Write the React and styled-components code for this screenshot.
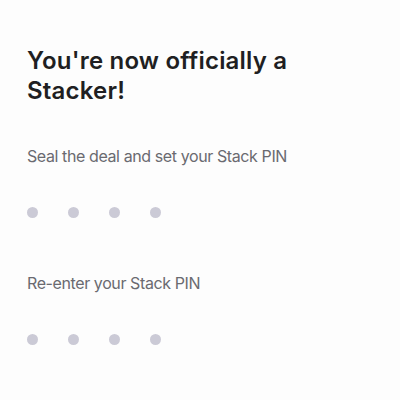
import React from 'react'
import styled, { createGlobalStyle } from 'styled-components'

const GlobalStyle = createGlobalStyle`
  html, body {
    margin: 0;
    padding: 0;
    background: #fdfdfd;
  }
  body {
    font-family: 'Inter', 'Lato', sans-serif;
  }
`

const Screen = styled.div`
  width: 400px;
  height: 400px;
  box-sizing: border-box;
  padding: 46px 27px 0;
  background: #fdfdfd;
  display: flex;
  flex-direction: column;
`

const Title = styled.h1`
  margin: 0;
  font-size: 24px;
  line-height: 30px;
  font-weight: 600;
  color: #1f1f22;
  letter-spacing: 0.2px;
`

const Label = styled.p`
  margin: ${p => p.top}px 0 0;
  font-size: 16px;
  line-height: 20px;
  font-weight: 400;
  color: #6a6a70;
  letter-spacing: -0.4px;
`

const Dots = styled.div`
  display: flex;
  gap: 30px;
  margin-top: ${p => p.top}px;
`

const Dot = styled.span`
  width: 11px;
  height: 11px;
  border-radius: 50%;
  background: #cbcad6;
`

const PinDots = ({ top }) => (
  <Dots top={top}>
    {[0, 1, 2, 3].map(i => <Dot key={i} />)}
  </Dots>
)

export default function App () {
  return (
    <>
      <GlobalStyle />
      <Screen>
        <Title>You're now officially a<br />Stacker!</Title>
        <Label top={40}>Seal the deal and set your Stack PIN</Label>
        <PinDots top={41} />
        <Label top={55}>Re-enter your Stack PIN</Label>
        <PinDots top={41} />
      </Screen>
    </>
  )
}
